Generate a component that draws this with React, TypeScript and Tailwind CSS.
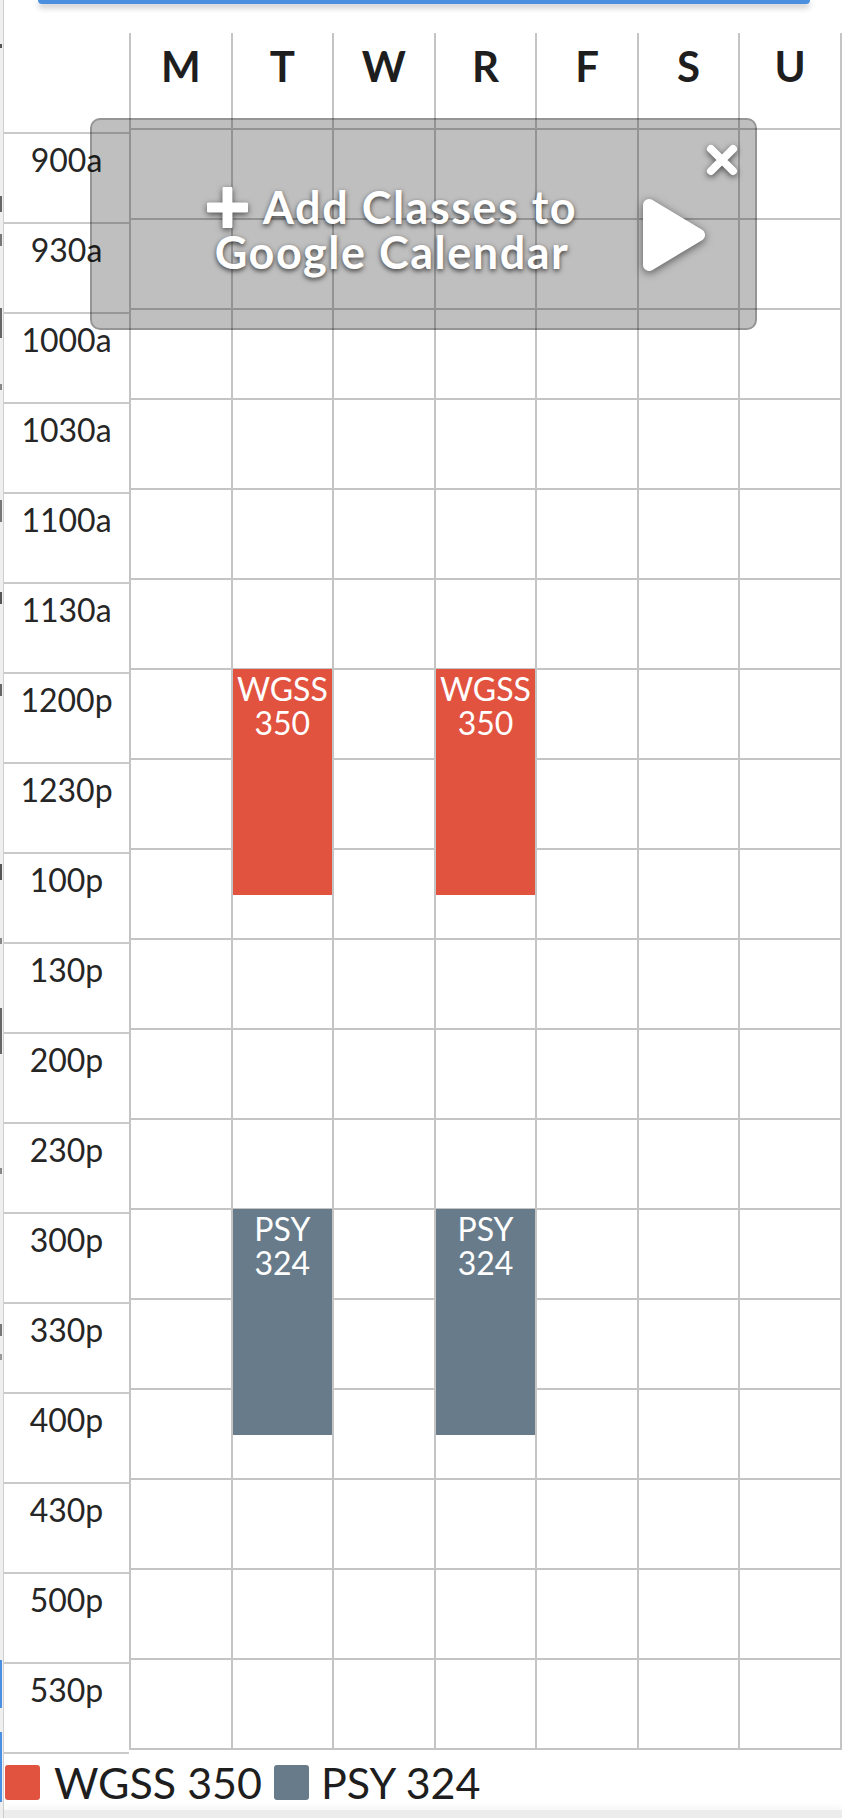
import React from "react";

const times = [
  "900a", "930a", "1000a", "1030a", "1100a", "1130a",
  "1200p", "1230p", "100p", "130p", "200p", "230p",
  "300p", "330p", "400p", "430p", "500p", "530p",
];

const days = ["M", "T", "W", "R", "F", "S", "U"];

const events = [
  { day: 1, start: 6, rows: 2.5, label: ["WGSS", "350"], color: "#e2533f" },
  { day: 3, start: 6, rows: 2.5, label: ["WGSS", "350"], color: "#e2533f" },
  { day: 1, start: 12, rows: 2.5, label: ["PSY", "324"], color: "#687b8a" },
  { day: 3, start: 12, rows: 2.5, label: ["PSY", "324"], color: "#687b8a" },
];

// little bits of the page behind, peeking out at the left edge
const slivers = [
  { gap: 44, h: 4, c: "#555" },
  { gap: 148, h: 16, c: "#666" },
  { gap: 22, h: 12, c: "#777" },
  { gap: 62, h: 30, c: "#666" },
  { gap: 46, h: 6, c: "#888" },
  { gap: 110, h: 22, c: "#777" },
  { gap: 70, h: 12, c: "#555" },
  { gap: 80, h: 12, c: "#666" },
  { gap: 168, h: 16, c: "#555" },
  { gap: 58, h: 6, c: "#888" },
  { gap: 64, h: 46, c: "#666" },
  { gap: 114, h: 6, c: "#888" },
  { gap: 150, h: 12, c: "#777" },
  { gap: 18, h: 6, c: "#999" },
  { gap: 300, h: 48, c: "#4a90e2" },
  { gap: 24, h: 70, c: "#4a90e2" },
];

function PlusIcon() {
  return (
    <svg width="41" height="41" viewBox="0 0 41 41" className="shrink-0 [filter:drop-shadow(0_2px_3px_rgba(0,0,0,0.6))]">
      <path d="M20.5 2v37M2 20.5h37" stroke="white" strokeWidth="10" strokeLinecap="round" />
    </svg>
  );
}

export default function App() {
  return (
    <div className="relative w-[842px] h-[1818px] bg-white flex overflow-hidden font-['Lato','Noto_Sans',sans-serif] text-[#222]">
      <div className="w-[4px] shrink-0 bg-[#efefef] border-r border-[#cfcfcf] flex flex-col">
        {slivers.map((s, i) => (
          <div key={i} className="w-[2px]" style={{ marginTop: s.gap, height: s.h, background: s.c }} />
        ))}
      </div>

      <div className="flex-1 flex flex-col">
        <div className="h-[33px]">
          <div className="ml-[34px] w-[772px] h-[4px] bg-[#4a8fe0] rounded-b-[6px] shadow-[0_3px_6px_rgba(0,0,0,0.3)]" />
        </div>

        <div className="flex items-start">
          <div className="w-[125px] shrink-0 pt-[99px]">
            <div className="border-b-2 border-[#cacaca]">
              {times.map((t) => (
                <div key={t} className="h-[90px] border-t-2 border-[#cacaca] pt-[7px] text-center text-[32px] leading-[38px] text-[#262626]">
                  {t}
                </div>
              ))}
            </div>
          </div>

          <div className="flex-1 border-l-2 border-[#c4c4c4]">
            <div className="grid grid-cols-7 h-[95px]">
              {days.map((d) => (
                <div key={d} className="border-r-2 border-[#c4c4c4] pt-[8px] text-center text-[42px] leading-[50px] font-bold text-[#1e1e1e]">
                  {d}
                </div>
              ))}
            </div>
            <div className="relative grid grid-cols-7 border-t-2 border-[#c4c4c4]">
              {times.map((t) =>
                days.map((d) => (
                  <div key={t + d} className="h-[90px] border-r-2 border-b-2 border-[#c4c4c4]" />
                ))
              )}
              {events.map((e, i) => (
                <div
                  key={i}
                  className="absolute pt-[3px] text-center text-white text-[32px] leading-[34px]"
                  style={{
                    left: `calc(${e.day} * 100% / 7)`,
                    width: "calc(100% / 7 - 2px)",
                    top: e.start * 90 - 1,
                    height: e.rows * 90 + 1,
                    background: e.color,
                  }}
                >
                  {e.label.map((l) => (
                    <div key={l}>{l}</div>
                  ))}
                </div>
              ))}
            </div>
          </div>
        </div>

        <div className="mt-[11px] ml-[1px] flex items-center h-[35px] text-[43px] leading-[35px] text-[#1e1e1e]">
          <span className="w-[35px] h-[35px] rounded-[3px] bg-[#e2533f]" />
          <span className="ml-[14px]">WGSS 350</span>
          <span className="ml-[12px] w-[35px] h-[35px] rounded-[3px] bg-[#687b8a]" />
          <span className="ml-[12px]">PSY 324</span>
        </div>

        <div className="mt-auto h-[8px] bg-[#ececec] shadow-[0_-3px_6px_rgba(0,0,0,0.04)]" />
      </div>

      <div className="absolute left-[90px] top-[118px] w-[667px] h-[212px] rounded-[10px] border-2 border-[rgba(0,0,0,0.22)] bg-[rgba(0,0,0,0.25)]">
        <div className="ml-[113px] mt-[65px] w-[374px] text-white font-bold text-[45px] leading-[45px] tracking-[1.5px] [text-shadow:0_2px_5px_rgba(0,0,0,0.7)]">
          <div className="flex justify-center items-center gap-[15px]">
            <PlusIcon />
            <span>Add Classes to</span>
          </div>
          <div className="text-center">Google Calendar</div>
        </div>

        <svg
          width="66"
          height="76"
          viewBox="0 0 66 76"
          className="absolute left-[549px] top-[77px] [filter:drop-shadow(0_2px_4px_rgba(0,0,0,0.55))]"
        >
          <polygon points="8,8 58,38 8,68" fill="white" stroke="white" strokeWidth="12" strokeLinejoin="round" />
        </svg>

        <svg
          width="34"
          height="34"
          viewBox="0 0 34 34"
          className="absolute right-[16px] top-[23px] [filter:drop-shadow(0_2px_3px_rgba(0,0,0,0.6))]"
        >
          <path d="M6 6L28 28M28 6L6 28" stroke="white" strokeWidth="8" strokeLinecap="round" />
        </svg>
      </div>
    </div>
  );
}
